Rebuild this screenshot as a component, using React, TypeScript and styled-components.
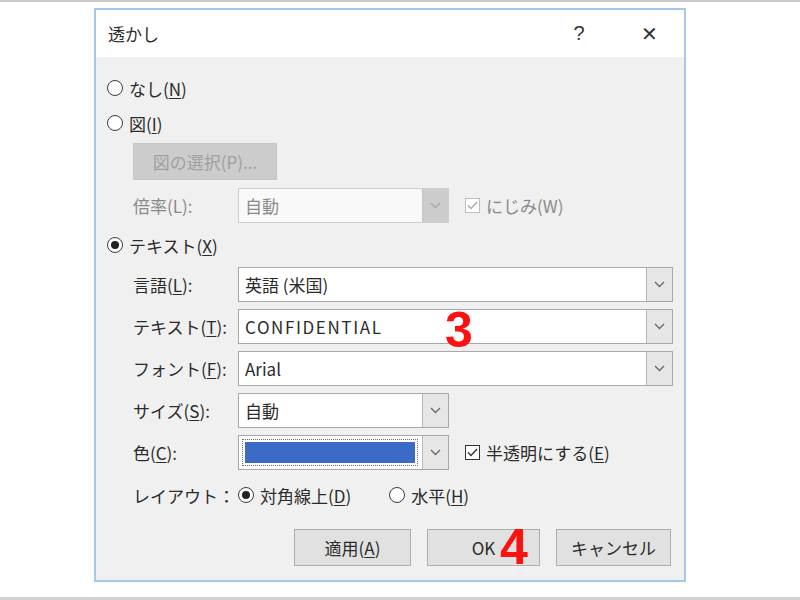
import styled, { createGlobalStyle } from "styled-components";

const GlobalStyle = createGlobalStyle`
  body {
    margin: 0;
    background: #ffffff;
    font-family: "Noto Sans CJK JP", "Noto Sans", sans-serif;
    color: #2b2b2b;
  }
`;

const Page = styled.div`
  width: 800px;
  height: 600px;
  box-sizing: border-box;
  border-top: 2px solid #c9c9c9;
  border-bottom: 3px solid #d2d2d2;
  padding: 6px 0 0 94px;
`;

const Dialog = styled.div`
  width: 592px;
  height: 574px;
  box-sizing: border-box;
  border: 2px solid #a6c8ec;
  display: flex;
  flex-direction: column;
  background: #f0f0f0;
`;

const TitleBar = styled.div`
  height: 47px;
  background: #ffffff;
  display: flex;
  align-items: center;
  padding: 0 0 0 12px;
  font-size: 17px;
`;

const Title = styled.span`
  flex: 1;
`;

const TitleButton = styled.span`
  width: 70px;
  text-align: center;
  font-size: 20px;
  color: #333;
  font-family: "Liberation Sans", sans-serif;
`;

const Body = styled.div`
  flex: 1;
  position: relative;
  padding: 17px 11px 0 11px;
  display: flex;
  flex-direction: column;
  font-size: 17px;
  white-space: nowrap;
`;

const Row = styled.div<{ $mt?: number; $h?: number; $indent?: boolean }>`
  display: flex;
  align-items: center;
  margin-top: ${(p) => p.$mt ?? 0}px;
  height: ${(p) => p.$h ?? 28}px;
  padding-left: ${(p) => (p.$indent ? 26 : 0)}px;
`;

const RadioLabel = styled.label<{ $disabled?: boolean }>`
  display: flex;
  align-items: center;
  gap: 6px;
  color: ${(p) => (p.$disabled ? "#8a8a8a" : "#2b2b2b")};
`;

const RadioCircle = styled.span<{ $on?: boolean }>`
  width: 14px;
  height: 14px;
  border-radius: 50%;
  border: 1px solid #3c3c3c;
  background: #fff;
  display: inline-flex;
  align-items: center;
  justify-content: center;
  &::after {
    content: "";
    width: 8px;
    height: 8px;
    border-radius: 50%;
    background: ${(p) => (p.$on ? "#222" : "transparent")};
  }
`;

const U = styled.span`
  text-decoration: underline;
  text-underline-offset: 2px;
`;

const Button = styled.button<{ $w: number; $disabled?: boolean }>`
  position: relative;
  width: ${(p) => p.$w}px;
  height: 37px;
  box-sizing: border-box;
  border: 1px solid ${(p) => (p.$disabled ? "#c6c6c6" : "#adadad")};
  background: ${(p) => (p.$disabled ? "#cccccc" : "#e1e1e1")};
  color: ${(p) => (p.$disabled ? "#a0a0a0" : "#2b2b2b")};
  font-family: inherit;
  font-size: 17px;
  padding: 0;
`;

const Form = styled.div`
  display: grid;
  grid-template-columns: 105px 1fr;
  row-gap: 7px;
  padding-left: 26px;
  margin-top: 8px;
`;

const FieldLabel = styled.div<{ $disabled?: boolean }>`
  height: 35px;
  display: flex;
  align-items: center;
  color: ${(p) => (p.$disabled ? "#8a8a8a" : "#2b2b2b")};
`;

const FieldRow = styled.div`
  display: flex;
  align-items: center;
  gap: 16px;
`;

const Select = styled.div<{ $w?: number; $disabled?: boolean }>`
  position: relative;
  width: ${(p) => (p.$w ? `${p.$w}px` : "100%")};
  height: 35px;
  box-sizing: border-box;
  border: 1px solid ${(p) => (p.$disabled ? "#cfcfcf" : "#a8a8a8")};
  background: ${(p) => (p.$disabled ? "#f9f9f9" : "#ffffff")};
  display: flex;
  align-items: stretch;
  color: ${(p) => (p.$disabled ? "#8a8a8a" : "#2b2b2b")};
`;

const SelectValue = styled.div<{ $mono?: boolean }>`
  flex: 1;
  display: flex;
  align-items: center;
  padding-left: 6px;
  letter-spacing: ${(p) => (p.$mono ? "1.6px" : "0")};
`;

const Swatch = styled.div`
  flex: 1;
  margin: 3px 4px 3px 3px;
  border: 1px dotted #6a6a6a;
  padding: 2px;
  display: flex;
  span {
    flex: 1;
    background: #3b6bc7;
  }
`;

const DropButton = styled.div<{ $disabled?: boolean }>`
  width: 25px;
  border-left: 1px solid ${(p) => (p.$disabled ? "#c4c4c4" : "#b8b8b8")};
  background: ${(p) => (p.$disabled ? "#cccccc" : "#e6e6e6")};
  display: flex;
  align-items: center;
  justify-content: center;
`;

const CheckLabel = styled.label<{ $disabled?: boolean }>`
  display: flex;
  align-items: center;
  gap: 6px;
  color: ${(p) => (p.$disabled ? "#8a8a8a" : "#2b2b2b")};
`;

const CheckBox = styled.span<{ $disabled?: boolean }>`
  width: 15px;
  height: 15px;
  box-sizing: border-box;
  border: 1px solid ${(p) => (p.$disabled ? "#bdbdbd" : "#333")};
  background: #fff;
  display: inline-flex;
  align-items: center;
  justify-content: center;
`;

const LayoutRow = styled.div`
  display: flex;
  align-items: center;
  height: 28px;
  margin-top: 11px;
  padding-left: 26px;
  gap: 38px;
`;

const LayoutLabel = styled.span`
  width: 67px;
  white-space: nowrap;
`;

const Buttons = styled.div`
  display: flex;
  justify-content: flex-end;
  gap: 16px;
  margin-top: 20px;
  padding-right: 2px;
`;

const Mark = styled.span<{ $top: number; $left: number }>`
  position: absolute;
  top: ${(p) => p.$top}px;
  left: ${(p) => p.$left}px;
  color: #ff1010;
  font-family: "Liberation Sans", sans-serif;
  font-weight: bold;
  font-size: 50px;
  line-height: 1;
`;

function Chevron({ disabled }: { disabled?: boolean }) {
  return (
    <svg width="11" height="7" viewBox="0 0 11 7">
      <polyline
        points="1,1 5.5,5.5 10,1"
        fill="none"
        stroke={disabled ? "#a8a8a8" : "#666"}
        strokeWidth="1.3"
      />
    </svg>
  );
}

function Tick({ disabled }: { disabled?: boolean }) {
  return (
    <svg width="11" height="9" viewBox="0 0 11 9">
      <polyline
        points="1,4.5 4,7.5 10,1"
        fill="none"
        stroke={disabled ? "#a8a8a8" : "#333"}
        strokeWidth="1.4"
      />
    </svg>
  );
}

export default function App() {
  return (
    <>
      <GlobalStyle />
      <Page>
        <Dialog>
          <TitleBar>
            <Title>透かし</Title>
            <TitleButton>?</TitleButton>
            <TitleButton>✕</TitleButton>
          </TitleBar>
          <Body>
            <Row>
              <RadioLabel>
                <RadioCircle />
                <span>
                  なし(<U>N</U>)
                </span>
              </RadioLabel>
            </Row>
            <Row $mt={7}>
              <RadioLabel>
                <RadioCircle />
                <span>
                  図(<U>I</U>)
                </span>
              </RadioLabel>
            </Row>
            <Row $mt={6} $h={37} $indent>
              <Button $w={144} $disabled>
                図の選択(P)...
              </Button>
            </Row>
            <Form>
              <FieldLabel $disabled>倍率(L):</FieldLabel>
              <FieldRow>
                <Select $w={211} $disabled>
                  <SelectValue>自動</SelectValue>
                  <DropButton $disabled>
                    <Chevron disabled />
                  </DropButton>
                </Select>
                <CheckLabel $disabled>
                  <CheckBox $disabled>
                    <Tick disabled />
                  </CheckBox>
                  <span>にじみ(W)</span>
                </CheckLabel>
              </FieldRow>
            </Form>
            <Row $mt={8}>
              <RadioLabel>
                <RadioCircle $on />
                <span>
                  テキスト(<U>X</U>)
                </span>
              </RadioLabel>
            </Row>
            <Form>
              <FieldLabel>
                言語(<U>L</U>):
              </FieldLabel>
              <Select>
                <SelectValue>英語 (米国)</SelectValue>
                <DropButton>
                  <Chevron />
                </DropButton>
              </Select>
              <FieldLabel>
                テキスト(<U>T</U>):
              </FieldLabel>
              <Select>
                <SelectValue $mono>CONFIDENTIAL</SelectValue>
                <DropButton>
                  <Chevron />
                </DropButton>
                <Mark $top={-5} $left={206}>
                  3
                </Mark>
              </Select>
              <FieldLabel>
                フォント(<U>F</U>):
              </FieldLabel>
              <Select>
                <SelectValue>Arial</SelectValue>
                <DropButton>
                  <Chevron />
                </DropButton>
              </Select>
              <FieldLabel>
                サイズ(<U>S</U>):
              </FieldLabel>
              <Select $w={211}>
                <SelectValue>自動</SelectValue>
                <DropButton>
                  <Chevron />
                </DropButton>
              </Select>
              <FieldLabel>
                色(<U>C</U>):
              </FieldLabel>
              <FieldRow>
                <Select $w={211}>
                  <Swatch>
                    <span />
                  </Swatch>
                  <DropButton>
                    <Chevron />
                  </DropButton>
                </Select>
                <CheckLabel>
                  <CheckBox>
                    <Tick />
                  </CheckBox>
                  <span>
                    半透明にする(<U>E</U>)
                  </span>
                </CheckLabel>
              </FieldRow>
            </Form>
            <LayoutRow>
              <LayoutLabel>レイアウト：</LayoutLabel>
              <RadioLabel>
                <RadioCircle $on />
                <span>
                  対角線上(<U>D</U>)
                </span>
              </RadioLabel>
              <RadioLabel>
                <RadioCircle />
                <span>
                  水平(<U>H</U>)
                </span>
              </RadioLabel>
            </LayoutRow>
            <Buttons>
              <Button $w={117}>
                適用(<U>A</U>)
              </Button>
              <Button $w={113}>
                OK
                <Mark $top={-8} $left={72}>
                  4
                </Mark>
              </Button>
              <Button $w={115}>キャンセル</Button>
            </Buttons>
          </Body>
        </Dialog>
      </Page>
    </>
  );
}
